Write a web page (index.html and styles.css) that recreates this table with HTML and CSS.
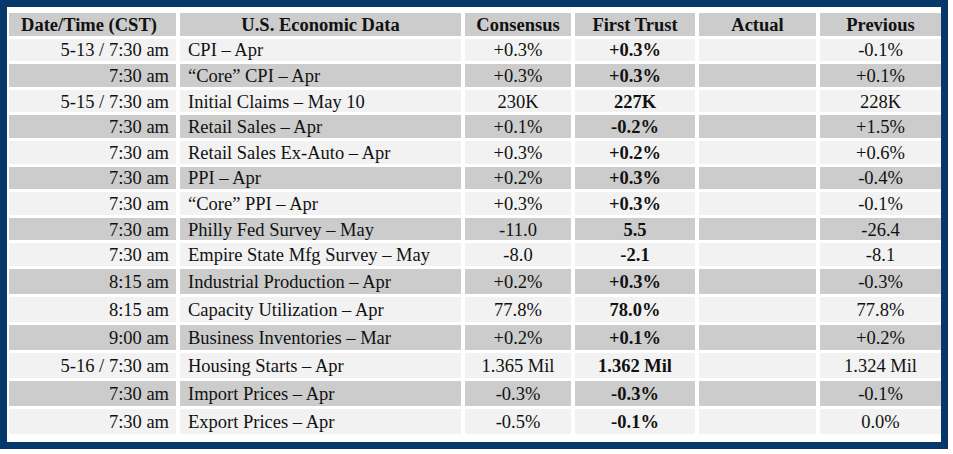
FILE: index.html
```html
<!DOCTYPE html>
<html lang="en">
<head>
<meta charset="utf-8">
<title>U.S. Economic Data Calendar</title>
<link rel="stylesheet" href="styles.css">
</head>
<body>
<div class="frame">
  <div class="calendar">
    <div class="row head">
      <div class="cell c-time">Date/Time (CST)</div>
      <div class="cell c-center">U.S. Economic Data</div>
      <div class="cell c-center">Consensus</div>
      <div class="cell c-center">First Trust</div>
      <div class="cell c-center">Actual</div>
      <div class="cell c-center">Previous</div>
    </div>
    <div class="row light">
      <div class="cell c-time">5-13 / 7:30 am</div>
      <div class="cell c-name">CPI – Apr</div>
      <div class="cell c-center">+0.3%</div>
      <div class="cell c-center c-bold">+0.3%</div>
      <div class="cell c-center"></div>
      <div class="cell c-center">-0.1%</div>
    </div>
    <div class="row dark">
      <div class="cell c-time">7:30 am</div>
      <div class="cell c-name">“Core” CPI – Apr</div>
      <div class="cell c-center">+0.3%</div>
      <div class="cell c-center c-bold">+0.3%</div>
      <div class="cell c-center"></div>
      <div class="cell c-center">+0.1%</div>
    </div>
    <div class="row light">
      <div class="cell c-time">5-15 / 7:30 am</div>
      <div class="cell c-name">Initial Claims – May 10</div>
      <div class="cell c-center">230K</div>
      <div class="cell c-center c-bold">227K</div>
      <div class="cell c-center"></div>
      <div class="cell c-center">228K</div>
    </div>
    <div class="row dark">
      <div class="cell c-time">7:30 am</div>
      <div class="cell c-name">Retail Sales – Apr</div>
      <div class="cell c-center">+0.1%</div>
      <div class="cell c-center c-bold">-0.2%</div>
      <div class="cell c-center"></div>
      <div class="cell c-center">+1.5%</div>
    </div>
    <div class="row light">
      <div class="cell c-time">7:30 am</div>
      <div class="cell c-name">Retail Sales Ex-Auto – Apr</div>
      <div class="cell c-center">+0.3%</div>
      <div class="cell c-center c-bold">+0.2%</div>
      <div class="cell c-center"></div>
      <div class="cell c-center">+0.6%</div>
    </div>
    <div class="row dark">
      <div class="cell c-time">7:30 am</div>
      <div class="cell c-name">PPI – Apr</div>
      <div class="cell c-center">+0.2%</div>
      <div class="cell c-center c-bold">+0.3%</div>
      <div class="cell c-center"></div>
      <div class="cell c-center">-0.4%</div>
    </div>
    <div class="row light">
      <div class="cell c-time">7:30 am</div>
      <div class="cell c-name">“Core” PPI – Apr</div>
      <div class="cell c-center">+0.3%</div>
      <div class="cell c-center c-bold">+0.3%</div>
      <div class="cell c-center"></div>
      <div class="cell c-center">-0.1%</div>
    </div>
    <div class="row dark">
      <div class="cell c-time">7:30 am</div>
      <div class="cell c-name">Philly Fed Survey – May</div>
      <div class="cell c-center">-11.0</div>
      <div class="cell c-center c-bold">5.5</div>
      <div class="cell c-center"></div>
      <div class="cell c-center">-26.4</div>
    </div>
    <div class="row light">
      <div class="cell c-time">7:30 am</div>
      <div class="cell c-name">Empire State Mfg Survey – May</div>
      <div class="cell c-center">-8.0</div>
      <div class="cell c-center c-bold">-2.1</div>
      <div class="cell c-center"></div>
      <div class="cell c-center">-8.1</div>
    </div>
    <div class="row dark tall">
      <div class="cell c-time">8:15 am</div>
      <div class="cell c-name">Industrial Production – Apr</div>
      <div class="cell c-center">+0.2%</div>
      <div class="cell c-center c-bold">+0.3%</div>
      <div class="cell c-center"></div>
      <div class="cell c-center">-0.3%</div>
    </div>
    <div class="row light tall">
      <div class="cell c-time">8:15 am</div>
      <div class="cell c-name">Capacity Utilization – Apr</div>
      <div class="cell c-center">77.8%</div>
      <div class="cell c-center c-bold">78.0%</div>
      <div class="cell c-center"></div>
      <div class="cell c-center">77.8%</div>
    </div>
    <div class="row dark tall">
      <div class="cell c-time">9:00 am</div>
      <div class="cell c-name">Business Inventories – Mar</div>
      <div class="cell c-center">+0.2%</div>
      <div class="cell c-center c-bold">+0.1%</div>
      <div class="cell c-center"></div>
      <div class="cell c-center">+0.2%</div>
    </div>
    <div class="row light tall">
      <div class="cell c-time">5-16 / 7:30 am</div>
      <div class="cell c-name">Housing Starts – Apr</div>
      <div class="cell c-center">1.365 Mil</div>
      <div class="cell c-center c-bold">1.362 Mil</div>
      <div class="cell c-center"></div>
      <div class="cell c-center">1.324 Mil</div>
    </div>
    <div class="row dark tall">
      <div class="cell c-time">7:30 am</div>
      <div class="cell c-name">Import Prices – Apr</div>
      <div class="cell c-center">-0.3%</div>
      <div class="cell c-center c-bold">-0.3%</div>
      <div class="cell c-center"></div>
      <div class="cell c-center">-0.1%</div>
    </div>
    <div class="row light tall">
      <div class="cell c-time">7:30 am</div>
      <div class="cell c-name">Export Prices – Apr</div>
      <div class="cell c-center">-0.5%</div>
      <div class="cell c-center c-bold">-0.1%</div>
      <div class="cell c-center"></div>
      <div class="cell c-center">0.0%</div>
    </div>
  </div>
</div>
</body>
</html>
```
FILE: styles.css
```css
html, body {
  margin: 0;
  padding: 0;
  background: #ffffff;
}

body {
  font-family: "Liberation Serif", "Times New Roman", serif;
  font-size: 18.5px;
  color: #111111;
}

.frame {
  box-sizing: border-box;
  width: 948px;
  height: 449px;
  border: 7px solid #06386c;
  background: #ffffff;
  padding: 6px 0 0 2px;
}

.calendar {
  display: flex;
  flex-direction: column;
  gap: 3px;
}

.row {
  display: grid;
  grid-template-columns: 167px 281px 106px 120px 117px 121px;
  column-gap: 4px;
  height: 22.6px;
}

.row.tall {
  height: 25px;
}

.head .cell {
  background: #cccccc;
  font-weight: bold;
  justify-content: center;
}

.light .cell {
  background: #f2f2f2;
}

.dark .cell {
  background: #cccccc;
}

.cell {
  box-sizing: border-box;
  display: flex;
  align-items: center;
  padding-top: 2px;
  white-space: nowrap;
  overflow: hidden;
}

.c-time {
  justify-content: flex-end;
  padding-right: 7px;
}

.c-name {
  justify-content: flex-start;
  padding-left: 8px;
}

.c-center {
  justify-content: center;
}

.c-bold {
  font-weight: bold;
}
```
